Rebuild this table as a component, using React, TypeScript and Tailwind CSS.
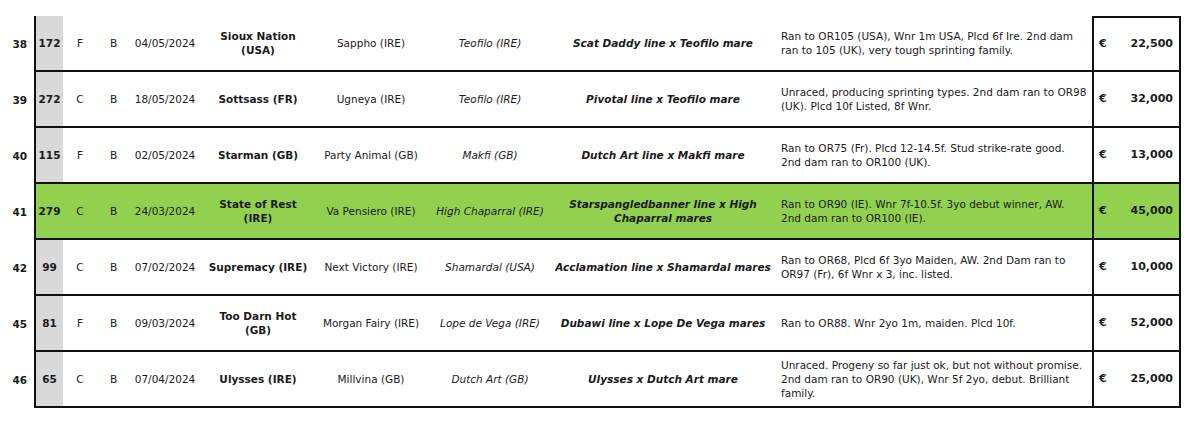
const rows = [
  {
    no: "38", lot: "172", sex: "F", col: "B", dob: "04/05/2024",
    sire: ["Sioux Nation", "(USA)"], dam: "Sappho (IRE)", damsire: "Teofilo (IRE)",
    cross: ["Scat Daddy line x Teofilo mare"],
    notes: ["Ran to OR105 (USA), Wnr 1m USA, Plcd 6f Ire. 2nd dam", "ran to 105 (UK), very tough sprinting family."],
    price: "22,500",
  },
  {
    no: "39", lot: "272", sex: "C", col: "B", dob: "18/05/2024",
    sire: ["Sottsass (FR)"], dam: "Ugneya (IRE)", damsire: "Teofilo (IRE)",
    cross: ["Pivotal line x Teofilo mare"],
    notes: ["Unraced, producing sprinting types. 2nd dam ran to OR98", "(UK). Plcd 10f Listed, 8f Wnr."],
    price: "32,000",
  },
  {
    no: "40", lot: "115", sex: "F", col: "B", dob: "02/05/2024",
    sire: ["Starman (GB)"], dam: "Party Animal (GB)", damsire: "Makfi (GB)",
    cross: ["Dutch Art line x Makfi mare"],
    notes: ["Ran to OR75 (Fr). Plcd 12-14.5f. Stud strike-rate good.", "2nd dam ran to OR100 (UK)."],
    price: "13,000",
  },
  {
    no: "41", lot: "279", sex: "C", col: "B", dob: "24/03/2024",
    sire: ["State of Rest", "(IRE)"], dam: "Va Pensiero (IRE)", damsire: "High Chaparral (IRE)",
    cross: ["Starspangledbanner line x High", "Chaparral mares"],
    notes: ["Ran to OR90 (IE). Wnr 7f-10.5f. 3yo debut winner, AW.", "2nd dam ran to OR100 (IE)."],
    price: "45,000", highlight: true,
  },
  {
    no: "42", lot: "99", sex: "C", col: "B", dob: "07/02/2024",
    sire: ["Supremacy (IRE)"], dam: "Next Victory (IRE)", damsire: "Shamardal (USA)",
    cross: ["Acclamation line x Shamardal mares"],
    notes: ["Ran to OR68, Plcd 6f 3yo Maiden, AW. 2nd Dam ran to", "OR97 (Fr), 6f Wnr x 3, inc. listed."],
    price: "10,000",
  },
  {
    no: "45", lot: "81", sex: "F", col: "B", dob: "09/03/2024",
    sire: ["Too Darn Hot", "(GB)"], dam: "Morgan Fairy (IRE)", damsire: "Lope de Vega (IRE)",
    cross: ["Dubawi line x Lope De Vega mares"],
    notes: ["Ran to OR88. Wnr 2yo 1m, maiden. Plcd 10f."],
    price: "52,000",
  },
  {
    no: "46", lot: "65", sex: "C", col: "B", dob: "07/04/2024",
    sire: ["Ulysses (IRE)"], dam: "Millvina (GB)", damsire: "Dutch Art (GB)",
    cross: ["Ulysses x Dutch Art mare"],
    notes: [
      "Unraced. Progeny so far just ok, but not without promise.",
      "2nd dam ran to OR90 (UK), Wnr 5f 2yo, debut. Brilliant",
      "family.",
    ],
    price: "25,000",
  },
];

function Lines({ lines }: { lines: string[] }) {
  return (
    <>
      {lines.map((l, i) => (
        <span key={i} className="block whitespace-nowrap">
          {l}
        </span>
      ))}
    </>
  );
}

export default function App() {
  return (
    <div
      className="w-[1200px] h-[433px] bg-white pt-[16px] text-[#1a1a1a] text-[10.5px] leading-[14px]"
      style={{ fontFamily: '"DejaVu Sans", Verdana, sans-serif' }}
    >
      {rows.map((r, i) => {
        const bg = r.highlight ? "bg-[#92d050]" : "bg-white";
        return (
          <div key={r.no} className="flex h-[56px]">
            <div className="w-[34px] flex items-center justify-end pr-[7px] font-bold">{r.no}</div>
            <div className={`flex w-[1058px] border-b-2 border-l-2 border-[#111] ${bg}`}>
              <div className={`w-[27px] flex items-center justify-center font-bold ${r.highlight ? "" : "bg-[#d9d9d9]"}`}>
                {r.lot}
              </div>
              <div className="w-[34px] flex items-center justify-center">{r.sex}</div>
              <div className="w-[33px] flex items-center justify-center">{r.col}</div>
              <div className="w-[70px] flex items-center justify-center">{r.dob}</div>
              <div className="w-[116px] flex flex-col items-center justify-center text-center font-bold">
                <Lines lines={r.sire} />
              </div>
              <div className="w-[110px] flex items-center justify-center whitespace-nowrap">{r.dam}</div>
              <div className="w-[128px] flex items-center justify-center italic whitespace-nowrap">{r.damsire}</div>
              <div className="w-[218px] flex flex-col items-center justify-center text-center font-bold italic">
                <Lines lines={r.cross} />
              </div>
              <div className="flex-1 flex flex-col justify-center pl-[9px]">
                <Lines lines={r.notes} />
              </div>
            </div>
            <div
              className={`w-[89px] flex items-center justify-between pl-[5px] pr-[6px] border-x-2 border-b-2 border-[#111] font-bold text-[11px] ${
                i === 0 ? "border-t-2" : ""
              } ${bg}`}
            >
              <span>€</span>
              <span>{r.price}</span>
            </div>
          </div>
        );
      })}
    </div>
  );
}
